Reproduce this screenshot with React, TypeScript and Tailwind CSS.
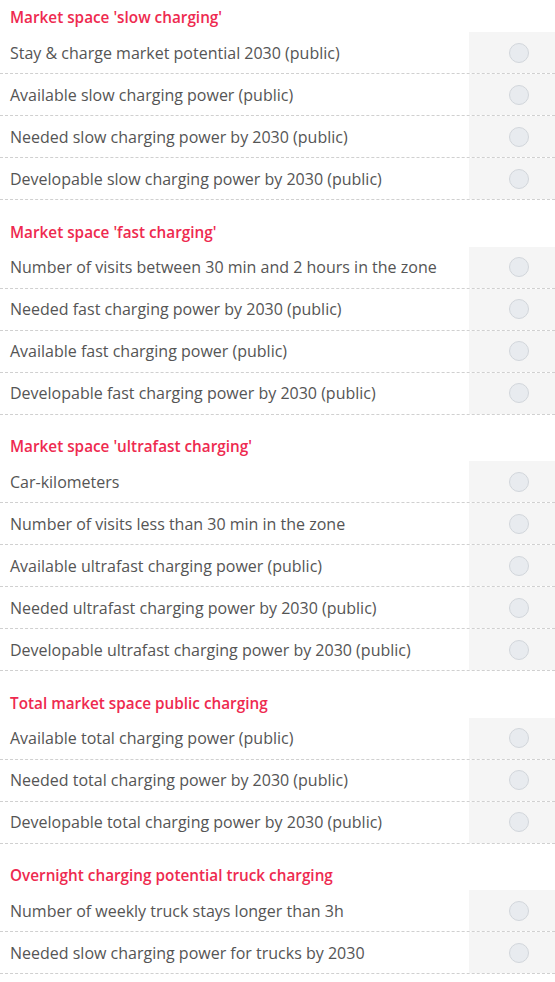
const sections: { title: string; rows: string[] }[] = [
  {
    title: "Market space 'slow charging'",
    rows: [
      'Stay & charge market potential 2030 (public)',
      'Available slow charging power (public)',
      'Needed slow charging power by 2030 (public)',
      'Developable slow charging power by 2030 (public)',
    ],
  },
  {
    title: "Market space 'fast charging'",
    rows: [
      'Number of visits between 30 min and 2 hours in the zone',
      'Needed fast charging power by 2030 (public)',
      'Available fast charging power (public)',
      'Developable fast charging power by 2030 (public)',
    ],
  },
  {
    title: "Market space 'ultrafast charging'",
    rows: [
      'Car-kilometers',
      'Number of visits less than 30 min in the zone',
      'Available ultrafast charging power (public)',
      'Needed ultrafast charging power by 2030 (public)',
      'Developable ultrafast charging power by 2030 (public)',
    ],
  },
  {
    title: 'Total market space public charging',
    rows: [
      'Available total charging power (public)',
      'Needed total charging power by 2030 (public)',
      'Developable total charging power by 2030 (public)',
    ],
  },
  {
    title: 'Overnight charging potential truck charging',
    rows: [
      'Number of weekly truck stays longer than 3h',
      'Needed slow charging power for trucks by 2030',
    ],
  },
];

export default function App() {
  return (
    <div className="w-[555px] bg-white font-['Open_Sans',sans-serif]">
      {sections.map((section, i) => (
        <div key={section.title} className={i > 0 ? 'mt-[14.5px]' : ''}>
          <div className="h-8 pt-[5px] pl-[10px] text-[15.3px] leading-6 font-semibold text-[#ee2a4f]">
            {section.title}
          </div>
          {section.rows.map((row) => (
            <div key={row} className="flex h-[42px] border-b border-dashed border-[#d0d0d0]">
              <div className="flex-1 flex items-center pl-[10px] text-[16px] text-[#555]">{row}</div>
              <div className="w-[86px] bg-[#f5f5f5] flex items-center pl-[40px]">
                <span className="w-5 h-5 rounded-full bg-[#e8ebef] border border-[#d2d6db]" />
              </div>
            </div>
          ))}
        </div>
      ))}
    </div>
  );
}
